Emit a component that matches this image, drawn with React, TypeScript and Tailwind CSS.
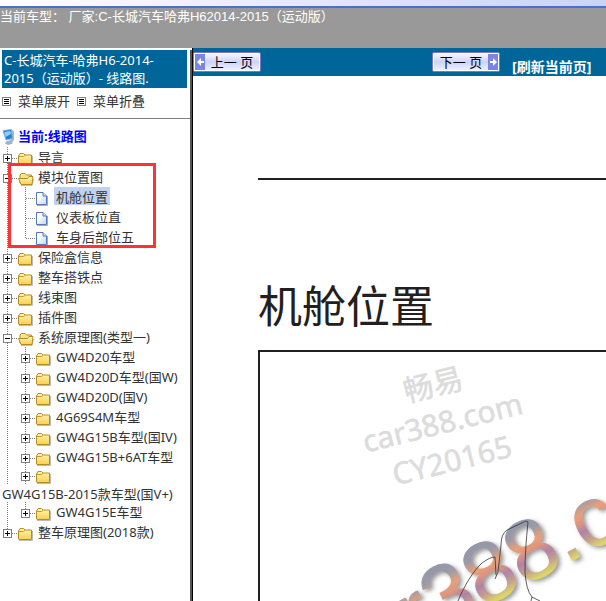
type Item = { label: string; kind?: "open" | "file"; current?: boolean; wrap?: boolean; children?: Item[] };

const TREE: Item[] = [
  { label: "导言" },
  {
    label: "模块位置图",
    kind: "open",
    children: [
      { label: "机舱位置", kind: "file", current: true },
      { label: "仪表板位直", kind: "file" },
      { label: "车身后部位五", kind: "file" },
    ],
  },
  { label: "保险盒信息" },
  { label: "整车搭铁点" },
  { label: "线束图" },
  { label: "插件图" },
  {
    label: "系统原理图(类型一)",
    kind: "open",
    children: [
      { label: "GW4D20车型" },
      { label: "GW4D20D车型(国W)" },
      { label: "GW4D20D(国V)" },
      { label: "4G69S4M车型" },
      { label: "GW4G15B车型(国IV)" },
      { label: "GW4G15B+6AT车型" },
      { label: "GW4G15B-2015款车型(国V+)", wrap: true },
      { label: "GW4G15E车型" },
    ],
  },
  { label: "整车原理图(2018款)" },
];

function Joint({ item, last }: { item: Item; last?: boolean }) {
  return (
    <svg className="h-5 w-[18px] shrink-0" viewBox="0 0 18 20" shapeRendering="crispEdges" fill="none">
      <path d={last ? "M7.5 0V11" : "M7.5 0V20"} stroke="#808080" strokeDasharray="1 1" />
      <path d="M8 11.5H18" stroke="#808080" strokeDasharray="1 1" />
      {item.kind !== "file" && (
        <>
          <rect x="3.5" y="7.5" width="8" height="8" fill="#fff" stroke="#808080" />
          <path d="M5 11.5H10" stroke="#000" />
          {item.kind !== "open" && <path d="M7.5 9V14" stroke="#000" />}
        </>
      )}
    </svg>
  );
}

function Rail() {
  return (
    <svg className="h-5 w-[18px] shrink-0" viewBox="0 0 18 20" shapeRendering="crispEdges">
      <path d="M7.5 0V20" stroke="#808080" strokeDasharray="1 1" />
    </svg>
  );
}

function NodeIcon({ kind }: { kind?: string }) {
  return (
    <svg className="h-5 w-[18px] shrink-0" viewBox="0 0 18 20" fill="none">
      <defs>
        <linearGradient id="folder" x1="0" y1="0" x2="0" y2="1">
          <stop offset="0" stopColor="#fff7b0" />
          <stop offset="1" stopColor="#f9cf52" />
        </linearGradient>
        <linearGradient id="page" x1="0" y1="0" x2="1" y2="1">
          <stop offset="0.3" stopColor="#fff" />
          <stop offset="1" stopColor="#bcd6f8" />
        </linearGradient>
      </defs>
      {kind === "file" && (
        <>
          <path d="M1 18.5H11.5V9" stroke="#aaa" />
          <path d="M0.5 5.5H7L10.5 9V17.5H0.5Z" fill="url(#page)" stroke="#5578b8" />
          <path d="M7 5.5V9H10.5" fill="#d8e6fa" stroke="#5578b8" />
        </>
      )}
      {kind === "open" && (
        <>
          <path d="M3 18.5H14L15.5 12" stroke="#bbb" />
          <path d="M2 16V8L3.5 6.5H7L8.5 8H13.5V16Z" fill="#fbe58a" stroke="#b98a22" />
          <path d="M0.5 11.5H9.5L11 9.5H15L14 17.5H3Z" fill="url(#folder)" stroke="#b98a22" />
        </>
      )}
      {!kind && (
        <>
          <path d="M1 18.5H14.5V9" stroke="#bbb" />
          <path d="M0.5 17V9L2 6.5H5.5L7 8H13.5V17.5H1Z" fill="url(#folder)" stroke="#b98a22" />
          <path d="M1 9.5H5.5L7 8.5" stroke="#c9992f" />
        </>
      )}
    </svg>
  );
}

function Row({ item, depth, last }: { item: Item; depth: number; last?: boolean }) {
  const label = (
    <a href="#" className={item.current ? "block h-[18px] bg-[#c1d2ee] px-0.5" : "block px-0.5"}>
      {item.label}
    </a>
  );
  return (
    <li>
      <div className={item.wrap ? "flex h-[18px] items-end overflow-hidden" : "flex h-5"}>
        {depth > 0 && <Rail />}
        <Joint item={item} last={last} />
        <NodeIcon kind={item.kind} />
        {!item.wrap && <span className="whitespace-nowrap leading-5">{label}</span>}
      </div>
      {item.wrap && <div className="h-[17px] whitespace-nowrap leading-[18px]">{label}</div>}
      {item.children && (
        <ul>
          {item.children.map((c, i) => (
            <Row key={c.label} item={c} depth={depth + 1} last={i === item.children!.length - 1} />
          ))}
        </ul>
      )}
    </li>
  );
}

function ListGlyph() {
  return (
    <svg className="size-[9px]" viewBox="0 0 9 9" shapeRendering="crispEdges">
      <rect x="0.5" y="0.5" width="8" height="8" fill="#fff" stroke="#808080" />
      <path d="M2 2.5H7M2 4.5H7M2 6.5H7" stroke="#000" />
    </svg>
  );
}

function Computer() {
  return (
    <svg className="h-4 w-[14px]" viewBox="0 0 14 16">
      <path d="M10 1L12 2V11L10 14L8 13Z" fill="#a9bacb" />
      <path d="M1 1.5L9.5 0.5L10.5 9.5L4 11Z" fill="#1f7fe0" stroke="#8fb2d8" />
      <path d="M2.5 3L8.5 2L9 5L3.5 8Z" fill="#8cd0fa" />
      <path d="M4 12.5L9 11V13L11 14.5L6 16L3 14.5Z" fill="#9fb3c8" />
    </svg>
  );
}

function PageButton({ label, dir }: { label: string; dir: "prev" | "next" }) {
  const arrow = (
    <span className="flex w-[10px] items-center justify-center bg-[#7b86e4]">
      <svg className="h-2 w-[7px]" viewBox="0 0 7 8" fill="#fff">
        <path d={dir === "prev" ? "M0 4L4 0V3H7V5H4V8Z" : "M7 4L3 0V3H0V5H3V8Z"} />
      </svg>
    </span>
  );
  return (
    <button className="h-5 w-[68px] rounded-xs border border-[#7a78cc] bg-white p-px text-[13px] text-black">
      <span className="flex h-4 bg-linear-to-b from-[#f4f6ff] via-[#ccd3fa] to-[#eef0ff] leading-4">
        {dir === "prev" && arrow}
        <span className="grow whitespace-pre">{label}</span>
        {dir === "next" && arrow}
      </span>
    </button>
  );
}

function Artwork() {
  return (
    <svg className="absolute top-0 left-0 h-[525px] w-[700px]" viewBox="193 76 700 525">
      <defs>
        <linearGradient id="chrome" gradientUnits="userSpaceOnUse" x1="0" y1="-60" x2="0" y2="2">
          <stop offset="0" stopColor="#9297a8" />
          <stop offset="0.2" stopColor="#9c9aa8" />
          <stop offset="0.38" stopColor="#e9a078" />
          <stop offset="0.5" stopColor="#dc9680" />
          <stop offset="0.64" stopColor="#b083a8" />
          <stop offset="0.8" stopColor="#c3a08c" />
          <stop offset="0.95" stopColor="#dcd568" />
        </linearGradient>
        <filter id="shade" x="-10%" y="-30%" width="120%" height="160%">
          <feDropShadow dx="3" dy="2" stdDeviation="2" floodColor="#555" floodOpacity="0.6" />
        </filter>
      </defs>
      <g filter="url(#shade)">
        <text transform="translate(336 686) rotate(-28)" fontFamily="Liberation Sans, sans-serif" fontSize="85" fill="url(#chrome)" stroke="url(#chrome)" strokeWidth="1">
          car388.com
        </text>
      </g>
      <path
        d="M458 601C464 586 474 570 482 563Q490 557 495 557L496 575M495 579L498 572L501 545Q501 534 507 530L526 521L528 522Q525 550 525 572Q526 590 532 597L540 601M532 597L531 601"
        fill="none"
        stroke="#333"
        strokeWidth="0.8"
      />
      <g transform="rotate(-14 440 425)" fill="#dcdcdc" stroke="#dcdcdc" strokeWidth="0.6" fontFamily="Noto Sans, Noto Sans CJK SC, sans-serif" fontSize="30" textAnchor="middle">
        <text x="443" y="395">畅易</text>
        <text x="443" y="434">car388.com</text>
        <text x="443" y="473">CY20165</text>
      </g>
    </svg>
  );
}

export default function App() {
  return (
    <div className="relative flex h-screen flex-col overflow-hidden bg-white font-['Noto_Sans','Noto_Sans_CJK_SC',sans-serif] text-[13px] text-[#333]">
      <header className="flex h-12 shrink-0 flex-col bg-[#999]">
        <div className="h-2 shrink-0 border-b-2 border-[#4a70c8] bg-linear-to-r from-white to-[#c8d4f4]" />
        <p className="font-['Liberation_Sans','Noto_Sans_CJK_SC',sans-serif] leading-[18px] whitespace-pre text-white">
          当前车型： 厂家:C-长城汽车哈弗H62014-2015（运动版）
        </p>
      </header>

      <div className="flex min-h-0 grow">
        <aside className="w-[193px] shrink-0 overflow-hidden border-r border-black">
          <div className="h-full border-r-2 border-[#555]">
            <h1 className="mt-0.5 mr-[3px] ml-0.5 h-[38px] bg-[#006699] px-0.5 pt-px leading-[18px] text-white">
              C-长城汽车-哈弗H6-2014-
              <br />
              2015（运动版）- 线路图.
            </h1>
            <div className="flex h-[31px] items-start gap-[7px] border-b border-[#808080] px-0.5 pt-1">
              {["菜单展开", "菜单折叠"].map((t) => (
                <button key={t} className="flex items-center gap-[7px] leading-[18px]">
                  <ListGlyph />
                  {t}
                </button>
              ))}
            </div>
            <nav>
              <h2 className="mt-2 flex h-5 items-center gap-0.5 pl-0.5 font-bold text-[#0000ff]">
                <Computer />
                当前:线路图
              </h2>
              <ul>
                {TREE.map((item, i) => (
                  <Row key={item.label} item={item} depth={0} last={i === TREE.length - 1} />
                ))}
              </ul>
            </nav>
          </div>
        </aside>

        <main className="flex min-w-0 grow flex-col">
          <div className="flex h-7 shrink-0 items-center bg-[#006699]">
            <PageButton label="上一 页" dir="prev" />
            <span className="w-[171px]" />
            <PageButton label="下一 页" dir="next" />
            <a href="#" className="mt-2 ml-3 text-[14px] font-bold whitespace-nowrap text-white">
              [刷新当前页]
            </a>
          </div>
          <article className="relative grow overflow-hidden pl-[65px]">
            <hr className="mt-[102px] border-t-2 border-[#231f20]" />
            <h2 className="mt-[94px] text-[44px] leading-[64px] font-normal text-[#231f20]">机舱位置</h2>
            <div className="mt-3 h-[600px] border-t-2 border-l-2 border-[#231f20]" />
            <Artwork />
          </article>
        </main>
      </div>
      {/* highlight over the open branch */}
      <div className="absolute top-[163px] left-2 h-[85px] w-[148px] border-3 border-[#ff3333]" />
    </div>
  );
}
